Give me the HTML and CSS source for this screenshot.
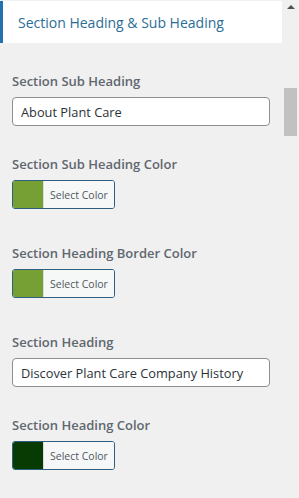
FILE: index.html
```html
<!DOCTYPE html>
<html lang="en">
<head>
<meta charset="utf-8">
<title>Section Heading &amp; Sub Heading</title>
<link rel="stylesheet" href="styles.css">
</head>
<body>
<div class="panel">
  <div class="main">
    <div class="section-title">Section Heading &amp; Sub Heading</div>
    <div class="controls">
      <div class="control control-text">
        <label class="control-label">Section Sub Heading</label>
        <input class="text-input" type="text" value="About Plant Care">
      </div>
      <div class="control control-color">
        <label class="control-label">Section Sub Heading Color</label>
        <button class="color-btn" type="button"><span class="swatch swatch-green"></span><span class="color-text">Select Color</span></button>
      </div>
      <div class="control control-color">
        <label class="control-label">Section Heading Border Color</label>
        <button class="color-btn" type="button"><span class="swatch swatch-green"></span><span class="color-text">Select Color</span></button>
      </div>
      <div class="control control-text">
        <label class="control-label">Section Heading</label>
        <input class="text-input" type="text" value="Discover Plant Care Company History">
      </div>
      <div class="control control-color">
        <label class="control-label">Section Heading Color</label>
        <button class="color-btn" type="button"><span class="swatch swatch-dark"></span><span class="color-text">Select Color</span></button>
      </div>
    </div>
  </div>
  <div class="scrollbar">
    <span class="arrow-up"></span>
    <span class="thumb"></span>
  </div>
</div>
</body>
</html>
```

FILE: styles.css
```css
html, body {
  margin: 0;
  padding: 0;
  background: #f0f0f1;
  overflow: hidden;
}
body {
  font-family: "Open Sans", "Noto Sans", sans-serif;
  color: #50575e;
}
.panel {
  display: flex;
  width: 299px;
  height: 498px;
}
.main {
  width: 283px;
  flex: none;
}
.section-title {
  margin-top: 1px;
  height: 42px;
  width: 282px;
  box-sizing: border-box;
  background: #fff;
  border-left: 3px solid #2271b1;
  display: flex;
  align-items: center;
  padding-left: 15px;
  font-size: 14px;
  color: #2a6d96;
}
.controls {
  padding: 28px 13px 0 12px;
}
.control {
  display: flex;
  flex-direction: column;
  align-items: flex-start;
}
.control-text {
  margin-bottom: 28px;
}
.control-color {
  margin-bottom: 34px;
}
.control-label {
  font-size: 13px;
  line-height: 20px;
  font-weight: 600;
  color: #60676e;
  margin-bottom: 6px;
}
.text-input {
  box-sizing: border-box;
  width: 258px;
  height: 29px;
  margin: 0;
  padding: 0 8px;
  border: 1px solid #8c8f94;
  border-radius: 4px;
  background: #fff;
  font-family: inherit;
  font-size: 12.8px;
  color: #2c3338;
}
.color-btn {
  box-sizing: border-box;
  display: flex;
  align-items: stretch;
  width: 103px;
  height: 29px;
  margin: 0;
  padding: 0;
  border: 1px solid #2f5f80;
  border-radius: 3px;
  overflow: hidden;
  background: #f6f7f7;
  font-family: inherit;
  cursor: pointer;
}
.swatch {
  width: 30px;
  flex: none;
}
.swatch-green { background: #76a033; }
.swatch-dark { background: #073b03; }
.color-text {
  flex: 1;
  display: flex;
  align-items: center;
  padding-left: 6px;
  border-left: 1px solid #dcdcde;
  font-size: 10.5px;
  color: #50575e;
  background: #f6f7f7;
}
.scrollbar {
  width: 16px;
  flex: none;
  display: flex;
  flex-direction: column;
  align-items: flex-start;
}
.arrow-up {
  margin: 5px 0 0 4px;
  width: 0;
  height: 0;
  border-left: 4px solid transparent;
  border-right: 4px solid transparent;
  border-bottom: 4px solid #505050;
}
.thumb {
  margin: 79px 0 0 1px;
  width: 13px;
  height: 48px;
  background: #c1c1c1;
}
```
